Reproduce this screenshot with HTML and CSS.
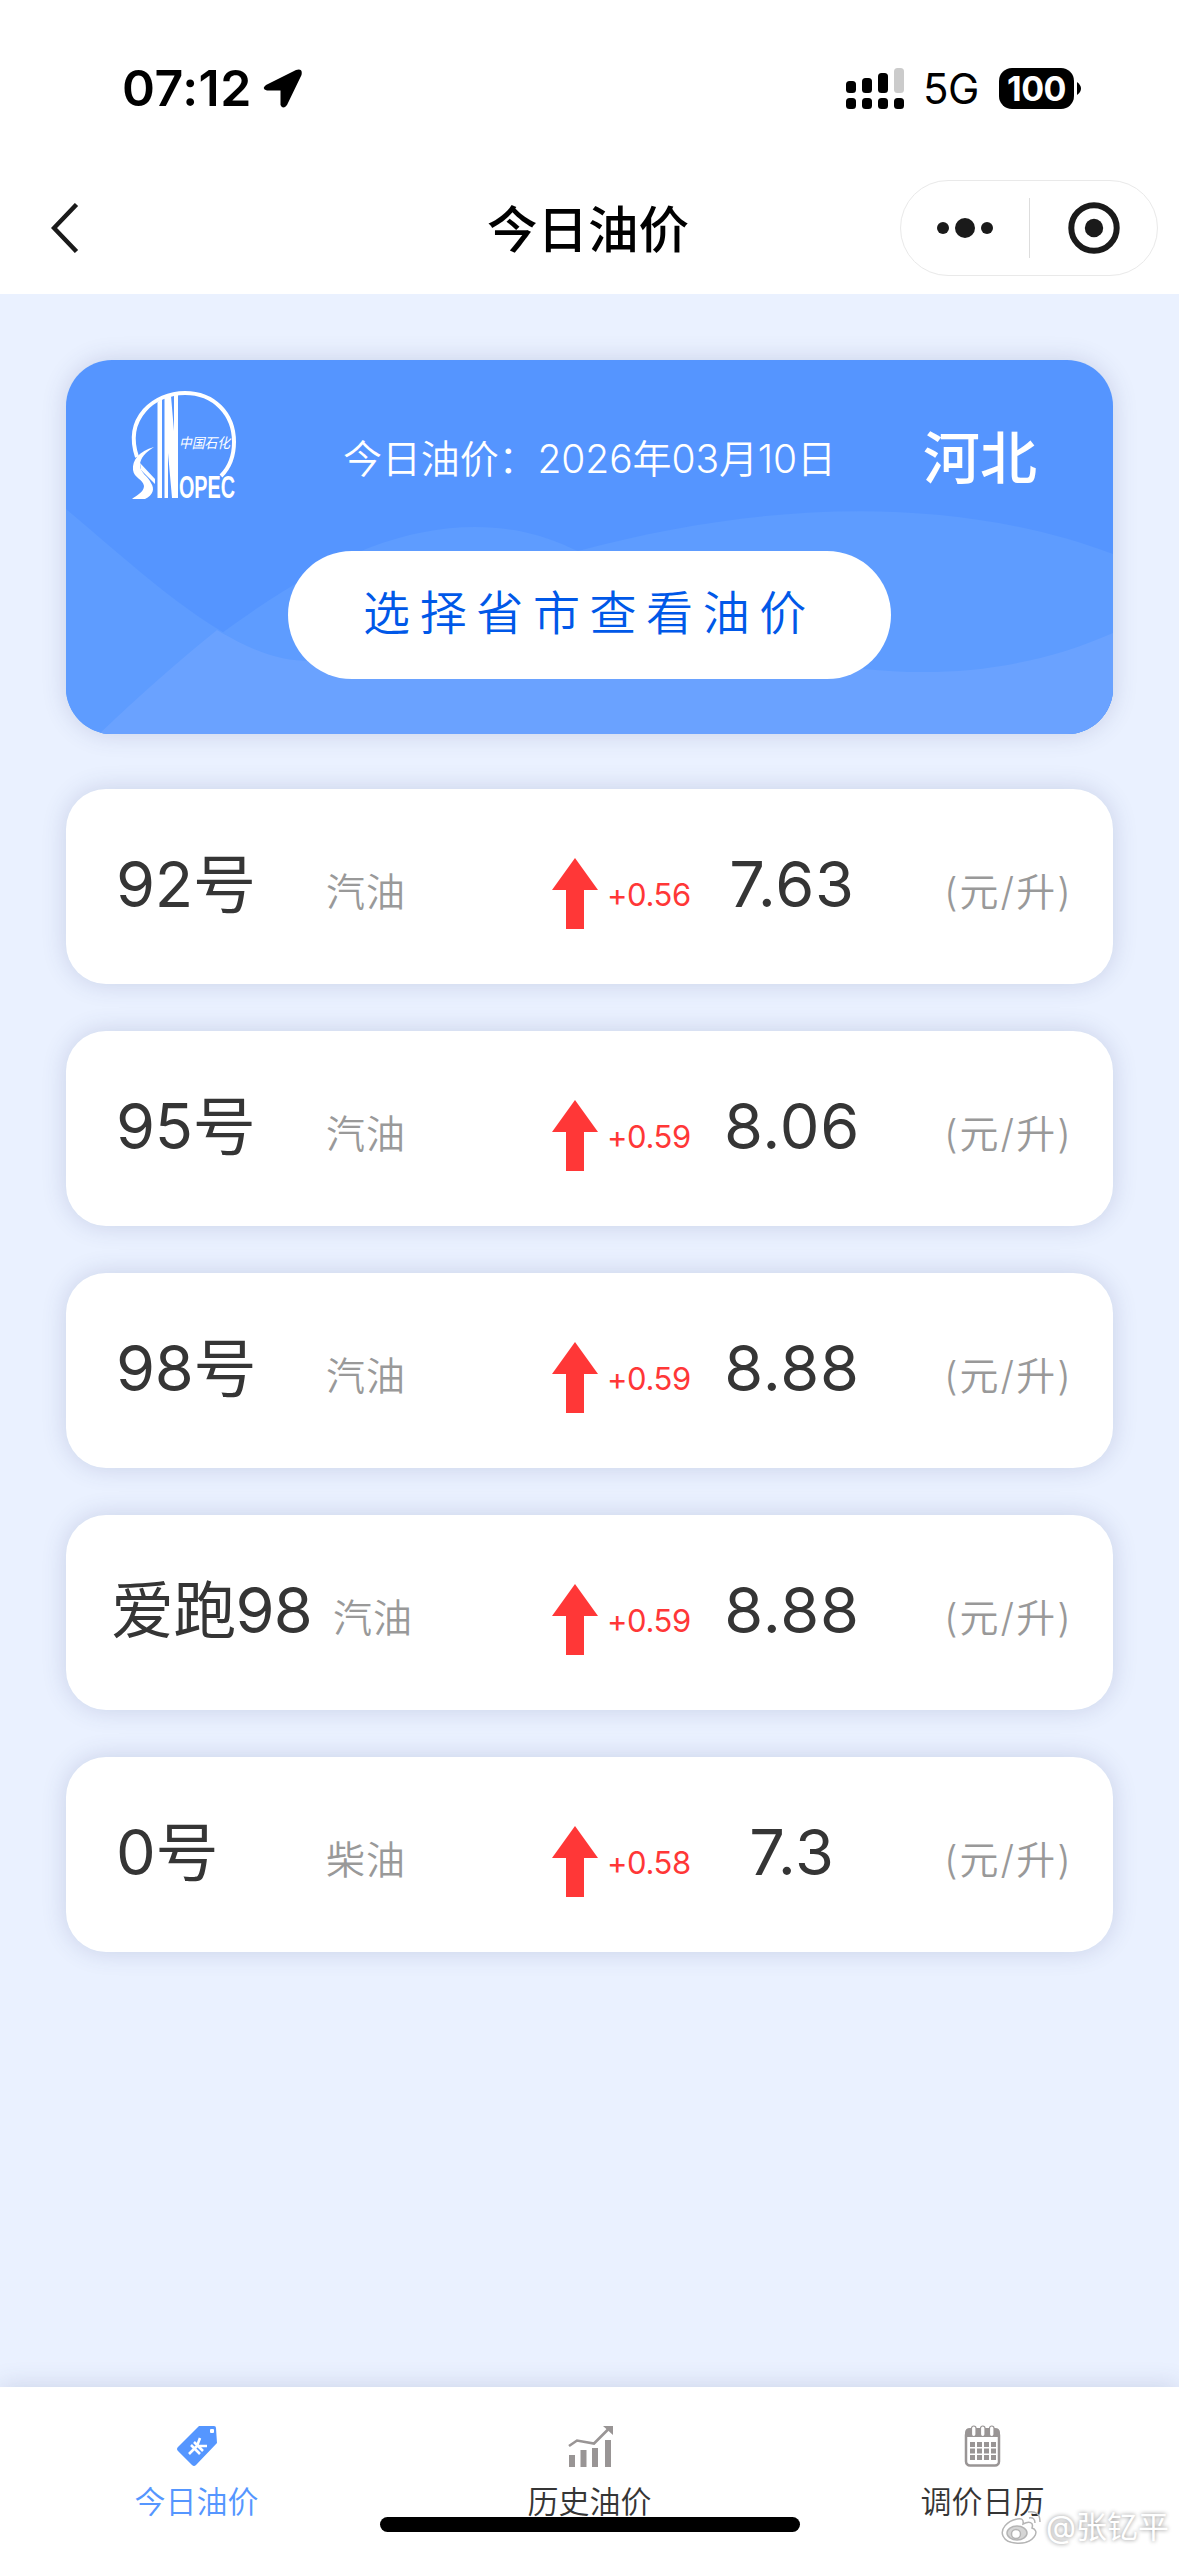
FILE: index.html
```html
<!DOCTYPE html>
<html lang="zh-CN">
<head>
    <meta charset="UTF-8">
    <meta name="viewport" content="width=device-width, initial-scale=1.0">
    <title>今日油价</title>
    <link rel="stylesheet" href="styles.css">
</head>
<body>
    <header class="header">
        <div class="status-bar">
            <div class="status-left">
                <span class="time">07:12</span>
                <svg class="location-icon" viewBox="0 0 39 39">
                    <path d="M3 16 L33 1 Q40 -1 38.500 6 L24 36 Q20 41 17.500 36 L17.500 21.500 L4 21.500 Q-2 20 3 16 Z"/>
                </svg>
            </div>
            <div class="status-right">
                <svg class="signal-icon" viewBox="0 0 58 41">
                    <rect x="0" y="13" width="10" height="12" rx="3.500"/>
                    <rect x="16" y="10" width="10" height="15" rx="3.500"/>
                    <rect x="32" y="5" width="10" height="20" rx="3.500"/>
                    <rect x="48" y="0" width="10" height="25" rx="3.500" fill="#cbcbcb"/>
                    <rect x="0" y="30" width="10" height="11" rx="3.500"/>
                    <rect x="16" y="30" width="10" height="11" rx="3.500"/>
                    <rect x="32" y="30" width="10" height="11" rx="3.500"/>
                    <rect x="48" y="30" width="10" height="11" rx="3.500"/>
                </svg>
                <span class="network">5G</span>
                <span class="battery">100</span>
                <svg class="battery-tip" viewBox="0 0 4 13"><path d="M0 0 Q4 3 4 6.500 Q4 10 0 13 Z"/></svg>
            </div>
        </div>
        <div class="nav-bar">
            <svg class="back-icon" viewBox="0 0 28 50">
                <path d="M25.500 1.500 L3 25 L25.500 48.500" fill="none" stroke="#1a1a1a" stroke-width="4.500"/>
            </svg>
            <h1 class="nav-title">今日油价</h1>
            <div class="capsule">
                <svg class="more-icon" viewBox="0 0 56 20">
                    <circle cx="6" cy="10" r="6"/>
                    <circle cx="28" cy="10" r="10"/>
                    <circle cx="50" cy="10" r="6"/>
                </svg>
                <span class="capsule-line"></span>
                <svg class="close-icon" viewBox="0 0 52 52">
                    <circle cx="26" cy="26" r="22.700" fill="none" stroke="#1a1a1a" stroke-width="6"/>
                    <circle cx="26" cy="26" r="9.200"/>
                </svg>
            </div>
        </div>
    </header>

    <main class="content">
        <section class="banner">
            <svg class="banner-bg" viewBox="0 0 1047 374">
                <path d="M0 149 C90 225 170 301 245 301 L510 305 L1047 273 L1047 374 L0 374 Z" fill="#5e9cff"/>
                <path d="M33 374 C190 235 300 167 409 167 C460 167 490 181 512 191 C700 140 890 135 1047 194 L1047 374 Z" fill="#5e9cff"/>
                <path d="M33 374 Q95 315 151 270 C190 293 215 301 245 301 L740 300 C840 320 945 318 1047 273 L1047 374 Z" fill="#6aa2ff"/>
            </svg>
            <div class="banner-top">
                <svg class="logo" viewBox="0 0 104 108">
                    <path d="M5 66 C-8 27 22 2 53 2 C82 2 102 23 102 51 C102 65 97 77 89 85" fill="none" stroke="#fff" stroke-width="4"/>
                    <path d="M25.500 11 L30 8 V107 H25.500 Z M32.500 7 L39 5 L42 40 V4 H46 V107 H40 L36 62 V107 H32.500 Z"/>
                    <path d="M22 56 C7 60 0 69 1 79 C2 87 11 88 12 95 C12 101 5 104 0 108 H13 C21 104 23 98 19 92 C16 85 8 82 8 74 C8 67 14 61 22 56 Z"/>
                    <path d="M8 72 L23 88 V93 L9 79 Z"/>
                    <text class="logo-name" x="47" y="107" textLength="56" lengthAdjust="spacingAndGlyphs">OPEC</text>
                    <text class="logo-text" x="47" y="57" textLength="51" lengthAdjust="spacingAndGlyphs">中国石化</text>
                </svg>
                <p class="date">今日油价：2026年03月10日</p>
                <p class="province">河北</p>
            </div>
            <button class="select-btn" type="button">选择省市查看油价</button>
        </section>

        <ul class="price-list">
            <li class="price-item">
                <span class="name">92号</span>
                <span class="type">汽油</span>
                <svg class="arrow" viewBox="0 0 46 71"><path d="M23 0 L46 32 H32 V71 H14 V32 H0 Z"/></svg>
                <span class="change">+0.56</span>
                <span class="price">7.63</span>
                <span class="unit">(元/升)</span>
            </li>
            <li class="price-item">
                <span class="name">95号</span>
                <span class="type">汽油</span>
                <svg class="arrow" viewBox="0 0 46 71"><path d="M23 0 L46 32 H32 V71 H14 V32 H0 Z"/></svg>
                <span class="change">+0.59</span>
                <span class="price">8.06</span>
                <span class="unit">(元/升)</span>
            </li>
            <li class="price-item">
                <span class="name">98号</span>
                <span class="type">汽油</span>
                <svg class="arrow" viewBox="0 0 46 71"><path d="M23 0 L46 32 H32 V71 H14 V32 H0 Z"/></svg>
                <span class="change">+0.59</span>
                <span class="price">8.88</span>
                <span class="unit">(元/升)</span>
            </li>
            <li class="price-item long">
                <span class="name">爱跑98</span>
                <span class="type">汽油</span>
                <svg class="arrow" viewBox="0 0 46 71"><path d="M23 0 L46 32 H32 V71 H14 V32 H0 Z"/></svg>
                <span class="change">+0.59</span>
                <span class="price">8.88</span>
                <span class="unit">(元/升)</span>
            </li>
            <li class="price-item">
                <span class="name">0号</span>
                <span class="type">柴油</span>
                <svg class="arrow" viewBox="0 0 46 71"><path d="M23 0 L46 32 H32 V71 H14 V32 H0 Z"/></svg>
                <span class="change">+0.58</span>
                <span class="price">7.3</span>
                <span class="unit">(元/升)</span>
            </li>
        </ul>
    </main>

    <nav class="tab-bar">
        <a class="tab active">
            <svg class="tab-icon" viewBox="0 0 42 42">
                <path d="M23 1 H38 Q40 1 40 3 L41 18 L20 40 Q18 42 16 40 L2 26 Q0 24 2 22 Z" fill="#5596ff"/>
                <rect x="34" y="4" width="4" height="4" rx="1" fill="#fff"/>
                <path d="M13 29 L21 21 L24 13 M21 21 L31 21 M15 20 L24 29 M18 17 L27 26" fill="none" stroke="#fff" stroke-width="2.600"/>
            </svg>
            <span>今日油价</span>
        </a>
        <a class="tab">
            <svg class="tab-icon chart" viewBox="0 0 46 42">
                <path d="M2 30 H8 V42 H2 Z M13.500 25 H19.500 V42 H13.500 Z M25 23 H31 V42 H25 Z M38 15 H44 V42 H38 Z" fill="#999595"/>
                <path d="M2 21 L10 15.500 L27 18.500 L41 4.500" fill="none" stroke="#999595" stroke-width="2.600"/>
                <path d="M36 1 H46 V10 Z" fill="#999595"/>
            </svg>
            <span>历史油价</span>
        </a>
        <a class="tab">
            <svg class="tab-icon" viewBox="0 0 42 42">
                <rect x="4" y="6" width="33" height="34.500" rx="4" fill="#fff" stroke="#999595" stroke-width="2.500"/>
                <path d="M3 12 V8 Q3 3 8 3 H33 Q38 3 38 8 V12 Z" fill="#999595"/>
                <g fill="#fff" stroke="#999595" stroke-width="1.200">
                    <rect x="9.500" y="1" width="4.500" height="10.500" rx="2.200"/>
                    <rect x="18.500" y="1" width="4.500" height="10.500" rx="2.200"/>
                    <rect x="27.500" y="1" width="4.500" height="10.500" rx="2.200"/>
                </g>
                <path d="M8 19.500 H34 M8 26 H34 M8 32.500 H34" fill="none" stroke="#999595" stroke-width="5" stroke-dasharray="5 2"/>
            </svg>
            <span>调价日历</span>
        </a>
        <div class="home-indicator"></div>
        <div class="watermark">
            <svg class="weibo-icon" viewBox="0 0 42 36">
                <path d="M16 10 C6 12 -1 20 2 27 C6 36 26 37 33 28 C37 23 34 20 31 19 C33 13 28 12 22 15 C23 10 20 9 16 10 Z"/>
                <ellipse class="weibo-eye" cx="16" cy="24" rx="10" ry="7"/>
                <circle cx="15" cy="25" r="4.500"/>
                <path d="M27 3 Q39 1 39 13 M28 9 Q34 8 34 14" fill="none"/>
            </svg>
            <span>@张钇平</span>
        </div>
    </nav>
</body>
</html>
```
FILE: styles.css
```css
* {
    box-sizing: border-box;
}

body {
    display: flex;
    flex-direction: column;
    height: 2556px;
    margin: 0;
    background-color: #eaf1ff;
    color: #353535;
    font-family: Inter, "Noto Sans CJK SC", sans-serif;
}

svg {
    display: block;
    flex: none;
}

.header {
    height: 294px;
    background-color: #fff;
}

/* status bar */
.status-bar {
    display: flex;
    justify-content: space-between;
    align-items: center;
    height: 176px;
    padding: 0 98px 0 122px;
    color: #000;
}

.status-left,
.status-right {
    display: flex;
    align-items: center;
}

.time {
    width: 141px;
    font-size: 50px;
    font-weight: 600;
    letter-spacing: 0.500px;
}

.location-icon {
    width: 39px;
    height: 39px;
}

.signal-icon {
    width: 58px;
    height: 41px;
}

.network {
    width: 76px;
    margin-left: 19px;
    font-size: 42px;
    letter-spacing: -0.500px;
}

.battery {
    width: 75px;
    height: 41px;
    border-radius: 13px;
    background-color: #000;
    color: #fff;
    font-size: 34px;
    font-weight: 700;
    line-height: 41px;
    text-align: center;
    letter-spacing: -0.500px;
}

.battery-tip {
    width: 4px;
    height: 13px;
    margin-left: 3px;
}

/* navigation bar */
.nav-bar {
    display: grid;
    grid-template-columns: 258px 1fr 258px;
    align-items: center;
    height: 104px;
    padding: 0 21px;
}

.back-icon {
    width: 28px;
    height: 50px;
    margin-left: 30px;
}

.nav-title {
    margin: -5px 0 0 -3px;
    color: #000;
    font-size: 50.500px;
    font-weight: 500;
    text-align: center;
}

.capsule {
    display: flex;
    align-items: center;
    height: 96px;
    padding-left: 36px;
    border: 1px solid #e9e9e9;
    border-radius: 48px;
    fill: #1a1a1a;
}

.more-icon {
    width: 56px;
    height: 20px;
}

.capsule-line {
    width: 1px;
    height: 60px;
    margin: 0 38px 0 36px;
    background-color: #ddd;
}

.close-icon {
    width: 52px;
    height: 52px;
}

.content {
    flex: 1;
    padding: 66px;
}

/* banner */
.banner {
    position: relative;
    overflow: hidden;
    width: 1047px;
    height: 374px;
    border-radius: 46px;
    background-color: #5595ff;
    color: #fff;
}

.banner,
.price-item {
    box-shadow: 0 0 24px rgba(60, 70, 130, 0.19);
}

.banner-bg {
    position: absolute;
    top: 0;
    left: 0;
    width: 1047px;
    height: 374px;
}

.banner-top {
    position: relative;
    display: flex;
    align-items: center;
    height: 191px;
    padding: 0 66px;
}

.logo {
    overflow: visible;
    width: 104px;
    height: 108px;
    margin-top: -22px;
    fill: #fff;
}

.logo-name {
    font-family: "Liberation Sans", sans-serif;
    font-size: 31px;
    font-weight: 700;
}

.logo-text {
    font-size: 14px;
    font-style: italic;
    font-weight: 400;
}

.date {
    width: 580px;
    margin: 0 0 0 107px;
    font-size: 39px;
    font-weight: 350;
    letter-spacing: -0.100px;
    white-space: nowrap;
}

.province {
    margin: -4px 0 0;
    font-size: 57px;
    font-weight: 500;
    white-space: nowrap;
}

.select-btn {
    position: relative;
    display: block;
    width: 603px;
    height: 128px;
    margin: 0 auto;
    padding: 0 0 11px;
    border: none;
    border-radius: 64px;
    background-color: #fff;
    color: #0058e8;
    font-family: inherit;
    font-size: 47px;
    font-weight: 350;
    letter-spacing: 9.600px;
}

/* price list */
.price-list {
    display: flex;
    flex-direction: column;
    gap: 47px;
    margin: 55px 0 0;
    padding: 0;
    list-style: none;
}

.price-item {
    display: grid;
    grid-template-columns: 210px 225px 55px 100px 170px 1fr;
    align-items: center;
    height: 195px;
    padding: 0 0 0 51px;
    border-radius: 40px;
    background-color: #fff;
    white-space: nowrap;
}

.price-item.long {
    grid-template-columns: 222px 218px 55px 100px 170px 1fr;
    padding-left: 46px;
}

.name,
.price {
    padding-bottom: 6px;
    font-size: 63px;
    font-weight: 380;
    line-height: 80px;
}

.name {
    margin-left: -1px;
    letter-spacing: -0.300px;
}

.long .name {
    letter-spacing: -0.800px;
}

.type,
.unit {
    padding-top: 5px;
    color: #999;
    font-size: 39px;
    font-weight: 350;
}

.type {
    margin-left: -1px;
    letter-spacing: 1px;
}

.arrow {
    width: 46px;
    height: 71px;
    margin-top: 14px;
    fill: #ff3737;
}

.change {
    padding-top: 16px;
    color: #ff3737;
    font-size: 31px;
    letter-spacing: -0.400px;
}

.price {
    letter-spacing: 0.800px;
    text-align: center;
}

.unit {
    padding-left: 67px;
    letter-spacing: 2px;
}

/* bottom tabs */
.tab-bar {
    position: relative;
    display: flex;
    height: 169px;
    background-color: #fff;
    box-shadow: 0 0 24px rgba(60, 70, 130, 0.19);
}

.tab {
    display: flex;
    flex: 1;
    flex-direction: column;
    align-items: center;
    padding-top: 38px;
    font-size: 31px;
    font-weight: 350;
    line-height: 46px;
}

.tab.active {
    color: #5596ff;
}

.tab-icon {
    width: 42px;
    height: 42px;
    margin-bottom: 12px;
}

.tab-icon.chart {
    width: 46px;
}

.home-indicator {
    position: absolute;
    bottom: 24px;
    left: 380px;
    width: 420px;
    height: 15px;
    border-radius: 8px;
    background-color: #000;
}

.watermark {
    position: absolute;
    right: 10px;
    bottom: 7px;
    display: flex;
    align-items: center;
    gap: 3px;
    color: #fff;
    font-size: 31px;
    line-height: 44px;
    text-shadow: 0 0 4px #888;
}

.weibo-icon {
    width: 42px;
    height: 36px;
    fill: #fff;
    stroke: #b5b5b5;
    stroke-width: 1.500;
}

.weibo-eye {
    fill: #d5d5d5;
}
```
